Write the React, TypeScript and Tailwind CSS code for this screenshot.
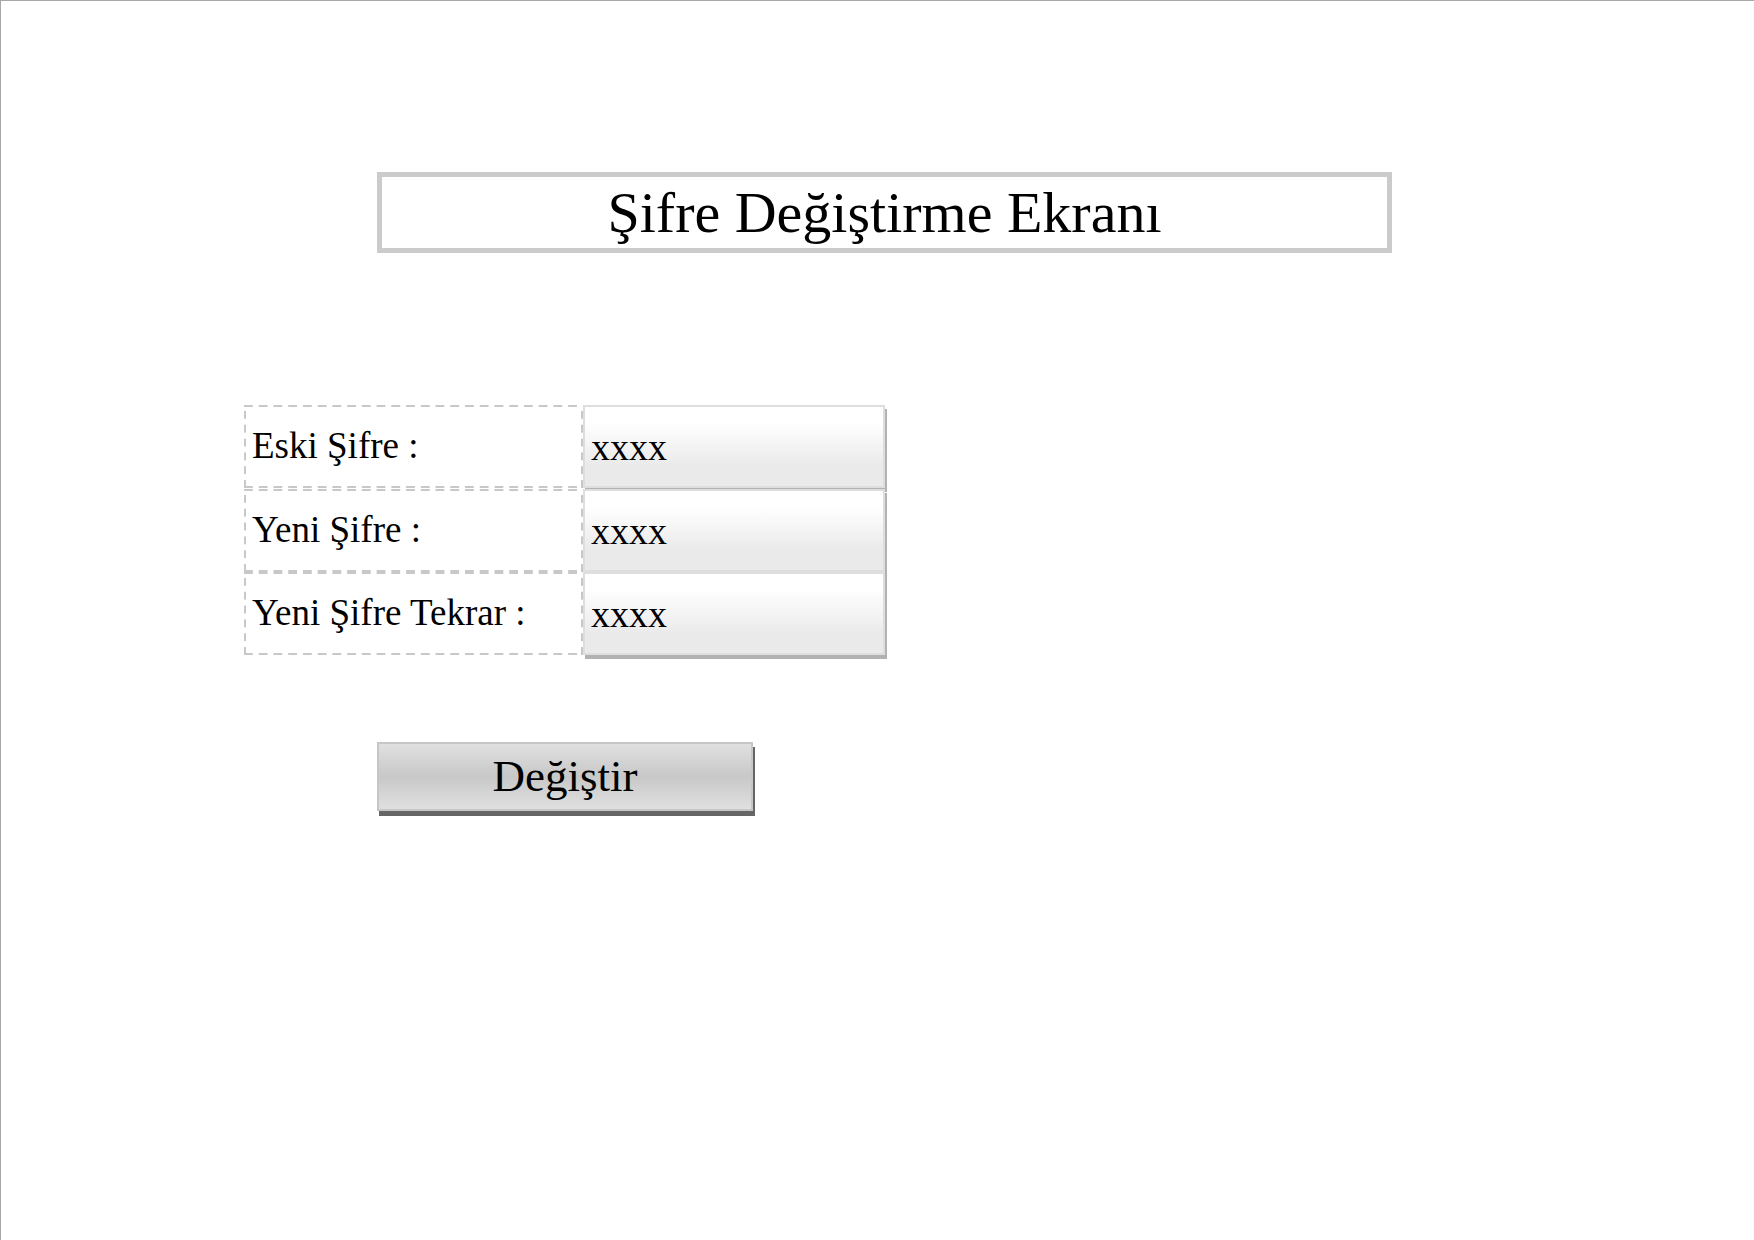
const fields = [
  { id: "old-password", label: "Eski Şifre :" },
  { id: "new-password", label: "Yeni Şifre :" },
  { id: "new-password-repeat", label: "Yeni Şifre Tekrar :" },
];

// Long dashes on all four sides, wider than the browser's own dashed border.
const dashedFrame =
  "bg-[linear-gradient(90deg,#c8c8c8_60%,transparent_60%),linear-gradient(90deg,#c8c8c8_60%,transparent_60%),linear-gradient(0deg,#c8c8c8_60%,transparent_60%),linear-gradient(0deg,#c8c8c8_60%,transparent_60%)] [background-position:left_top,left_bottom,left_top,right_top] [background-repeat:round_no-repeat,round_no-repeat,no-repeat_round,no-repeat_round] [background-size:15px_2px,15px_2px,2px_15px,2px_15px]";

function FieldRow({ id, label }: { id: string; label: string }) {
  return (
    <div className="flex h-[83px] first:mb-px">
      <label
        htmlFor={id}
        className={`flex w-[339px] items-center pb-0.5 pl-2 text-[37px] leading-none ${dashedFrame}`}
      >
        {label}
      </label>
      <input
        id={id}
        type="text"
        defaultValue="xxxx"
        className="min-w-0 flex-1 border-2 border-[#dedede] bg-linear-to-b from-white from-20% to-[#eaeaea] to-75% pl-1.5 text-[38px] leading-none shadow-[2px_4px_0_#b2b2b2] outline-none"
      />
    </div>
  );
}

export default function App() {
  return (
    <main className="min-h-screen border-t border-l border-[#a8a8a8] bg-white font-['Liberation_Serif',serif] text-black">
      <header className="pt-[171px] pr-[362px] pl-[376px]">
        <h1 className="flex h-[81px] items-center justify-center border-5 border-[#cbcbcb] text-[58px] leading-none whitespace-nowrap">
          Şifre Değiştirme Ekranı
        </h1>
      </header>
      <form
        className="mt-[152px] ml-[243px] max-w-[641px]"
        onSubmit={(event) => event.preventDefault()}
      >
        {fields.map((field) => (
          <FieldRow key={field.id} {...field} />
        ))}
        <button
          type="submit"
          className="mt-[87px] ml-[133px] flex h-[69px] w-[376px] items-center justify-center border-2 border-[#c6c6c6] bg-linear-to-b from-[#e0e0e0] via-[#c8c8c8] to-[#e0e0e0] text-[45px] leading-none shadow-[2px_5px_0_#666]"
        >
          Değiştir
        </button>
      </form>
    </main>
  );
}
